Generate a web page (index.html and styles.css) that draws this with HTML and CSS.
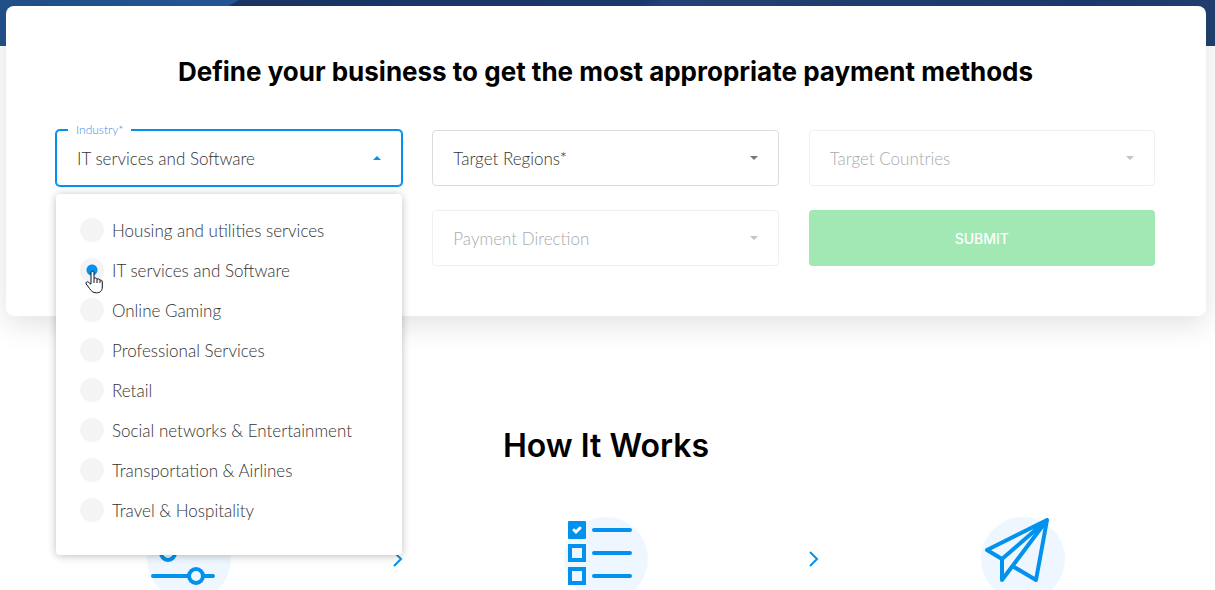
FILE: index.html
```html
<!DOCTYPE html>
<html lang="en">
<head>
  <meta charset="UTF-8">
  <meta name="viewport" content="width=device-width, initial-scale=1.0">
  <title>Payment Methods</title>
  <link rel="stylesheet" href="styles.css">
</head>

<body>

  <div class="hero"></div>

  <main class="container">
    <section class="card">
      <h2 class="card-title">Define your business to get the most appropriate payment methods</h2>

      <form class="filter-form">
        <div class="field field-open">
          <label class="field-label" for="industry">Industry*</label>
          <select class="select" id="industry" name="industry">
            <option>IT services and Software</option>
          </select>
          <svg class="arrow" viewBox="0 0 8 4"><path d="M0 4L4 0L8 4Z"/></svg>

          <!-- Industry menu -->
          <div class="menu">
            <label class="option"><input type="radio" name="industry-option"> Housing and utilities services</label>
            <label class="option">
              <input type="radio" name="industry-option" checked> IT services and Software
              <svg class="pointer" viewBox="0 0 18 24">
                <path d="M6 14V3C6 .6 9 .6 9 3V8.5C10 7.5 12 8 12 9.3C13 8.4 15 9 15 10.3C16 9.6 17.3 10.3 17.3 12V17C17.3 21 15 22.8 11.5 22.8C7.8 22.8 6.2 21 4.5 18.5L1.2 14C.2 12.2 2.3 11 3.8 12.4L6 14.4" />
                <path d="M9 8.5V13M12 9.3V13M15 10.3V13" />
              </svg>
            </label>
            <label class="option"><input type="radio" name="industry-option"> Online Gaming</label>
            <label class="option"><input type="radio" name="industry-option"> Professional Services</label>
            <label class="option"><input type="radio" name="industry-option"> Retail</label>
            <label class="option"><input type="radio" name="industry-option"> Social networks &amp; Entertainment</label>
            <label class="option"><input type="radio" name="industry-option"> Transportation &amp; Airlines</label>
            <label class="option"><input type="radio" name="industry-option"> Travel &amp; Hospitality</label>
          </div>
        </div>

        <div class="field">
          <select class="select" name="regions" aria-label="Target Regions">
            <option>Target Regions*</option>
          </select>
          <svg class="arrow" viewBox="0 0 8 4"><path d="M0 0L4 4L8 0Z"/></svg>
        </div>

        <div class="field field-disabled">
          <select class="select" name="countries" aria-label="Target Countries" disabled>
            <option>Target Countries</option>
          </select>
          <svg class="arrow" viewBox="0 0 8 4"><path d="M0 0L4 4L8 0Z"/></svg>
        </div>

        <div class="field field-disabled field-direction">
          <select class="select" name="direction" aria-label="Payment Direction" disabled>
            <option>Payment Direction</option>
          </select>
          <svg class="arrow" viewBox="0 0 8 4"><path d="M0 0L4 4L8 0Z"/></svg>
        </div>

        <button class="submit" type="submit" disabled>SUBMIT</button>
      </form>
    </section>

    <section class="how">
      <h2 class="how-title">How It Works</h2>

      <div class="steps">
        <div class="step">
          <svg class="step-icon" viewBox="0 0 84 84">
            <circle class="halo" cx="42" cy="42" r="42"/>
            <path d="M6 13H66M6 36H66M6 59H66"/>
            <circle class="knob" cx="49" cy="13" r="7"/>
            <circle class="knob" cx="21" cy="36" r="7"/>
            <circle class="knob" cx="49" cy="59" r="7"/>
          </svg>
        </div>

        <svg class="chevron" viewBox="0 0 50 16"><path d="M21 1L28 8L21 15"/></svg>

        <div class="step">
          <svg class="step-icon" viewBox="0 0 84 84">
            <circle class="halo" cx="42" cy="42" r="42"/>
            <rect class="solid" x="4" y="4" width="18" height="18" rx="1"/>
            <path class="check" d="M10 13L12 15L16 11"/>
            <rect x="6" y="29" width="14" height="14"/>
            <rect x="6" y="52" width="14" height="14"/>
            <path d="M30 13H66M30 36H66M30 59H66"/>
          </svg>
        </div>

        <svg class="chevron" viewBox="0 0 50 16"><path d="M21 1L28 8L21 15"/></svg>

        <div class="step">
          <svg class="step-icon" viewBox="0 0 84 84">
            <circle class="halo" cx="42" cy="42" r="42"/>
            <path class="plane" d="M66 3L6 33L21 42L66 3L55 63L33 50M21 42V63L66 3"/>
          </svg>
        </div>
      </div>
    </section>
  </main>

</body>
</html>
```

FILE: styles.css
```css
* {
  box-sizing: border-box;
}

body {
  margin: 0;
  height: 100vh;
  overflow: hidden;
  background-color: #fff;
  color: #000;
  font-family: Lato, "Open Sans", sans-serif;
}

.hero {
  height: 46px;
  background: linear-gradient(149deg, #215088 0, #23599a 122px, #1b3564 124px, #1b3a70 333px, #24437a 343px, #21406f 430px, #1b3a70 560px, #23426f 100%);
}

.container {
  padding: 0 9px 0 6px;
  margin-top: -40px;
}

.card {
  position: relative;
  padding: 48px 51px 50px 50px;
  border-radius: 8px;
  background-color: #fff;
  box-shadow: 0 8px 30px rgba(0, 0, 0, 0.12);
}

.card-title {
  margin: 0 0 40px;
  font-family: Inter, sans-serif;
  font-size: 26px;
  line-height: 36px;
  font-weight: 700;
  text-align: center;
}

/* Form */
.filter-form {
  display: grid;
  grid-template-columns: repeat(3, 1fr);
  gap: 24px 30px;
}

.field {
  position: relative;
}

.field-direction {
  grid-column: 2;
}

.select {
  display: block;
  width: 100%;
  height: 56px;
  padding: 0 40px 0 20px;
  border: 1px solid #dcdcdc;
  border-radius: 4px;
  background-color: #fff;
  color: #333;
  font-family: inherit;
  font-size: 17px;
  font-weight: 300;
  appearance: none;
}

.arrow {
  position: absolute;
  top: 26px;
  right: 21px;
  width: 8px;
  height: 4px;
  fill: #777;
}

.field-open .select {
  border-color: #0092ed;
  box-shadow: 0 0 0 1px #0092ed;
}

.field-open .arrow {
  fill: #0092ed;
}

.field-label {
  position: absolute;
  top: -8px;
  left: 12px;
  padding: 0 8px;
  background-color: #fff;
  color: #3d8fe8;
  font-size: 12px;
  line-height: 16px;
  font-weight: 300;
}

.field-disabled .select {
  border-color: #f0f0f0;
  color: #aaa;
  opacity: 1;
}

.field-disabled .arrow {
  fill: #c4c4c4;
}

.submit {
  height: 56px;
  border: none;
  border-radius: 4px;
  background-color: #a1e8b5;
  color: #fff;
  font-family: Inter, sans-serif;
  font-size: 14px;
  font-weight: 500;
}

/* Dropdown menu */
.menu {
  position: absolute;
  top: 64px;
  left: 0;
  right: 0;
  z-index: 1;
  display: flex;
  flex-direction: column;
  gap: 16px;
  padding: 24px 24px 33px;
  border-radius: 4px;
  background-color: #fff;
  box-shadow: 0 1px 8px rgba(0, 0, 0, 0.26);
}

.option {
  position: relative;
  display: flex;
  align-items: center;
  gap: 8px;
  height: 24px;
  color: #333;
  font-size: 17px;
  font-weight: 300;
}

.option input {
  width: 24px;
  height: 24px;
  margin: 0;
  border-radius: 50%;
  background-color: #f4f4f4;
  appearance: none;
}

.option input:checked {
  background-image: radial-gradient(circle, #0092ed 5px, transparent 6px);
}

.pointer {
  position: absolute;
  top: 12px;
  left: 5px;
  width: 18px;
  height: 24px;
  fill: #fff;
  stroke: #101020;
  stroke-width: 1;
}

/* How it works */
.how {
  padding-top: 108px;
}

.how-title {
  margin: 0 0 49px;
  font-family: Inter, sans-serif;
  font-size: 32px;
  line-height: 44px;
  font-weight: 600;
  text-align: center;
}

.steps {
  display: flex;
  align-items: center;
}

.step {
  flex: 1;
  display: flex;
  justify-content: center;
}

.step-icon {
  width: 84px;
  height: 84px;
  fill: none;
  stroke: #0092ed;
  stroke-width: 4;
  stroke-linecap: round;
}

.halo {
  fill: #eef7ff;
  stroke: none;
}

.knob {
  fill: #eef7ff;
}

.solid {
  fill: #0092ed;
  stroke: none;
}

.plane {
  stroke-linejoin: round;
}

.check {
  stroke: #fff;
  stroke-width: 3;
}

.chevron {
  width: 50px;
  height: 16px;
  fill: none;
  stroke: #0092ed;
  stroke-width: 2;
}
```
